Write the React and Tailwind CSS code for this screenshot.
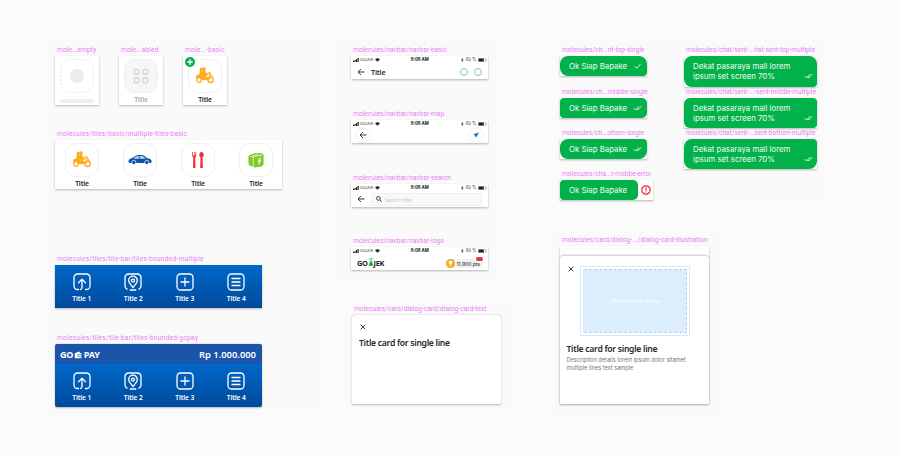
import React from "react";

const body = { fontFamily: 'Inter, "Liberation Sans", sans-serif' };

function Frame({ label, className, track = "tracking-[0.03px]", children }) {
  return (
    <div className={className}>
      <div className={`h-[11px] pl-[2px] text-[6.6px] leading-[11px] whitespace-nowrap text-[#e77df3] font-[Roboto,sans-serif] ${track}`}>{label}</div>
      {children}
    </div>
  );
}

const shadow = "shadow-[0_0.5px_2px_rgba(0,0,0,0.28)]";
const cardTitle = "text-[8.6px] leading-[12px] tracking-[-0.28px] font-semibold whitespace-nowrap text-[#25282c] font-['Noto_Sans',sans-serif]";

function Bike() {
  return (
    <svg viewBox="0 0 20 17" className="h-[17px] w-[20px]" fill="none" stroke="#fdaa1c">
      <circle cx="4" cy="13" r="2.3" strokeWidth="1.3" />
      <circle cx="15.600" cy="12.800" r="2.700" strokeWidth="1.400" />
      <path d="M5 1.200l1.500-.4.9 1 .9-1.400 1.900.3.300 1.800-.4 1.500.8 2.300 2 .5-.1 1.700-2.100.1.800 1.800 1.800-.4.500 1.700-1.300 1.300H7.200L6 11 1 10.400 1.400 8.500l2.800-.7L5 5z" fill="#fdaa1c" strokeWidth="0.3" />
      <path d="M12.600 6.200l2-.8 2.600 5M14 7.300l1 5.200" strokeWidth="1.200" />
      <path d="M7.300 3v1.600M7.300 8.300l1.700 1.600" stroke="#fff" strokeWidth=".5" />
    </svg>
  );
}

function Car() {
  return (
    <svg viewBox="0 0 24 12" className="h-[12px] w-[24px]">
      <path d="M1 5.500C3 4.400 5 3.800 7 2.200 9.500 .6 15 .8 17 2.300L19 4.200C21.500 4.600 23.600 5.200 23.600 7.200L23.200 9H1.200C.4 8 .4 6.500 1 5.500z" fill="#0b53a6" />
      <path d="M5.700 4.700C7 2.800 8.500 2.100 10.800 2.100v2.600zM11.700 2.100c2 0 3.300.4 4.700 1.200l1 1.400h-5.700z" fill="#c4d8ee" />
      <circle cx="5.800" cy="8.400" r="2.100" fill="#0b53a6" stroke="#fff" strokeWidth=".7" />
      <circle cx="18.800" cy="8.400" r="2.100" fill="#0b53a6" stroke="#fff" strokeWidth=".7" />
    </svg>
  );
}

function Cutlery() {
  return (
    <svg viewBox="0 0 14 18" className="h-[18px] w-[14px]">
      <path d="M1.200 1v3.800a2 2 0 0 0 1.100 1.600L2 17h2.500l-.3-10.600a2 2 0 0 0 1-1.600V1h-.8v3.500h-.8V1h-.7v3.500h-.9V1z" fill="#ee303b" />
      <path d="M10.500 1a2.200 2.900 0 0 1 1 5.500L11.900 17H9.200l.3-10.500A2.200 2.900 0 0 1 10.500 1z" fill="#ee303b" />
    </svg>
  );
}

function Bag() {
  return (
    <svg viewBox="0 0 18 18" className="h-[18px] w-[18px]">
      <path d="M1.500 5.500Q1.500 4.500 2.500 4L8.500 1.900 15 2.300l1.600 1.500V13.500L14.500 15.500 8 16.600 2.600 14.500 1.500 13z" fill="#80ca28" />
      <path d="M6.300 16V6.800Q6.300 5.800 7.300 5.600L15.500 3.900M6.300 6.300L3 5.200M5.200 5l6-1.800" fill="none" stroke="#fff" strokeWidth=".7" />
      <path d="M13.500 6.500l-2.500 3.800 1.400.1-.9 3.200 2.300-4-1.200-.2z" fill="#fff" stroke="#fff" strokeWidth=".5" />
    </svg>
  );
}

function Disabled() {
  return (
    <svg viewBox="0 0 16 16" className="h-[16px] w-[16px]" fill="none" stroke="#d2d2d4" strokeWidth="1.300">
      <rect x="1.200" y="1.400" width="4.800" height="4.800" rx="1.400" />
      <circle cx="12.500" cy="3.800" r="2.500" />
      <rect x="1.200" y="10" width="4.800" height="4.800" rx="1.400" />
      <rect x="10" y="10" width="4.800" height="4.800" rx="1.400" />
    </svg>
  );
}

function Tile({ icon, title = "Title", muted }) {
  return (
    <div className="flex h-[49px] w-[44px] flex-col items-center pt-[2.5px]">
      <div className={`flex h-[34px] w-[34px] items-center justify-center rounded-[11px] border border-[#f0f0f1] ${muted ? "bg-[#f6f6f6]" : "bg-white"}`}>{icon}</div>
      <div className={`mt-[2px] text-[6.800px] leading-[10px] tracking-[-0.15px] font-semibold font-['Noto_Sans',sans-serif] ${muted ? "text-[#aaabad]" : "text-[#25282c]"}`}>{title}</div>
    </div>
  );
}

const barShapes = [
  <g key="a"><path d="M5.500 16.500h-1A3.500 3.500 0 0 1 1 13V4.500A3.500 3.500 0 0 1 4.500 1h9A3.500 3.500 0 0 1 17 4.500V13a3.500 3.500 0 0 1-3.500 3.500h-1" /><path d="M7.500 16.500Q9 16 9 14V7M5.500 9.800L9 6.300l3.500 3.500" /></g>,
  <g key="b"><path d="M3 16.200A3.500 3.500 0 0 1 1 13V4.500A3.500 3.500 0 0 1 4.500 1h9A3.500 3.500 0 0 1 17 4.500V13a3.500 3.500 0 0 1-2 3.200M6.200 17h5.600" /><path d="M9 14.500C6.500 11.500 4.700 9.700 4.700 7.500a4.300 4.300 0 0 1 8.600 0c0 2.200-1.800 4-4.300 7z" /><circle cx="9" cy="7.600" r="1.500" /></g>,
  <g key="c"><rect x="1" y="1" width="16" height="16" rx="3.500" /><path d="M9 5v8M5 9h8" /></g>,
  <g key="d"><rect x="1" y="1" width="16" height="16" rx="3.500" /><path d="M5 5.500h8M5 9h8M5 12.500h8" /></g>,
];

function BlueTiles() {
  return (
    <div className="flex h-[43px] bg-gradient-to-b from-[#0068c9] to-[#004a9c] pl-[1px]">
      {barShapes.map((shape, i) => (
        <div key={i} className="flex w-[51.500px] flex-col items-center pt-[8px]">
          <svg viewBox="0 0 18 18" className="h-[18px] w-[18px]" fill="none" stroke="#fff" strokeWidth="1.300" strokeLinecap="round" strokeLinejoin="round">{shape}</svg>
          <div className="mt-[3px] text-[6.600px] leading-[10px] tracking-[-0.1px] font-semibold text-white font-['Noto_Sans',sans-serif]">Title {i + 1}</div>
        </div>
      ))}
    </div>
  );
}

function StatusBar() {
  return (
    <div className="flex h-[7px] items-center justify-between pr-[1.500px] pl-[2px] text-[4.300px] leading-[7px] text-[#333] font-[Inter,sans-serif]">
      <div className="flex w-[46px] items-center gap-[1px]">
        <svg viewBox="0 0 6 4" className="h-[4px] w-[6px]" fill="#222"><path d="M0 2.600h1.100V4H0zM1.500 2h1.100v2H1.500zM3 1.100h1.100V4H3zM4.500 0h1.200v4H4.500z" /></svg>
        <span className="text-[4px]">GOJEK</span>
        <svg viewBox="0 0 6 4" className="ml-[1px] h-[4px] w-[5px]" fill="#222"><path d="M0 1.200Q3-1.200 6 1.200L3 4z" /></svg>
      </div>
      <span className="font-bold text-[#222]">8:08 AM</span>
      <div className="flex w-[46px] items-center justify-end gap-[1px]">
        <svg viewBox="0 0 3 5" className="mr-[1px] h-[4px] w-[2.500px]" fill="none" stroke="#222" strokeWidth=".6"><path d="M.4 1.400l2.200 2.200L1.500 4.600V.4l1.100 1L.4 3.600" /></svg>
        <span>60 %</span>
        <svg viewBox="0 0 9 4" className="h-[4px] w-[9px]"><rect x=".25" y=".25" width="7.500" height="3.500" rx=".7" fill="none" stroke="#777" strokeWidth=".4" /><rect x=".5" y=".5" width="5.300" height="3" fill="#222" /><path d="M8.300 1.300v1.400" stroke="#777" strokeWidth=".5" /></svg>
      </div>
    </div>
  );
}

function Back() {
  return <svg viewBox="0 0 8 8" className="h-[8px] w-[8px] shrink-0" fill="none" stroke="#222" strokeWidth=".9"><path d="M7.500 4H1M4 1L1 4l3 3" /></svg>;
}

function Navbar({ label, className, children }) {
  return (
    <Frame label={label} className={className}>
      <div className={`h-[23px] w-[137px] bg-white ${shadow}`}>
        <StatusBar />
        <div className="flex h-[16px] items-center">{children}</div>
      </div>
    </Frame>
  );
}

function Close() {
  return <svg viewBox="0 0 6 6" className="h-[6px] w-[6px]" stroke="#25282c" strokeWidth=".9"><path d="M.7.7l4.600 4.600M5.300.7L.7 5.300" /></svg>;
}

function Ticks({ single }) {
  return (
    <svg viewBox="0 0 9 6" className="h-[6px] w-[9px] shrink-0" fill="none" stroke="#d6f7e0" strokeWidth="1">
      {single ? <path d="M1.800 3.200L3.800 5.200L7.500 1" /> : <path d="M.8 3.200L2.500 5L5.800 1.300M3.700 4L4.700 5L8.200 1.200" />}
    </svg>
  );
}

function Single({ label, track, className, shape, single, error }) {
  return (
    <Frame label={label} className={className} track={track}>
      <div className={`flex h-[20px] items-center bg-white ${shadow} ${error ? "w-[93px]" : "w-[87px]"}`}>
        <div className={`flex h-[20px] items-center bg-[#03b14b] pl-[9px] ${error ? "w-[78px]" : "w-[87px]"} ${shape}`}>
          <span className="w-[64px] text-[7.800px] leading-[10px] whitespace-nowrap text-[#eefdf2]">Ok Siap Bapake</span>
          {!error && <Ticks single={single} />}
        </div>
        {error && (
          <svg viewBox="0 0 10 10" className="ml-[3px] h-[10px] w-[10px]" fill="none" stroke="#e0262e" strokeWidth="1.200"><circle cx="5" cy="5" r="4.200" /><path d="M5 2.500v3.200M5 6.500v1.100" /></svg>
        )}
      </div>
    </Frame>
  );
}

function Multiple({ label, className, shape }) {
  return (
    <Frame label={label} className={className} track="tracking-[0px]">
      <div className={`w-[133px] bg-white ${shadow}`}>
        <div className={`flex items-start justify-between bg-[#03b14b] pt-[5px] pr-[4px] pl-[9px] ${shape}`}>
          <div className="text-[7.800px] leading-[10px] whitespace-nowrap text-[#eefdf2]">Dekat pasaraya mall lorem<br />ipsum set screen 70%</div>
          <div className="pt-[12px]"><Ticks /></div>
        </div>
      </div>
    </Frame>
  );
}

export default function App() {
  return (
    <div className="flex h-[455px] w-[900px] items-start overflow-hidden bg-[#fbfbfb]" style={body}>
      <section className="mt-[38px] ml-[48px] h-[377px] w-[272px] shrink-0 bg-[#fafafa] pt-[7px] pl-[7px]">
        <div className="flex gap-[20px]">
          <Frame label="mole...empty" className="w-[44px]" track="tracking-[0.1px]">
            <div className={`flex h-[49px] w-[44px] flex-col items-center bg-white pt-[2.500px] ${shadow}`}>
              <svg viewBox="0 0 34 34" className="h-[34px] w-[34px]">
                <rect x=".6" y=".6" width="32.800" height="32.800" rx="11" fill="none" stroke="#e4e4e7" strokeDasharray="2.200 1.800" />
                <circle cx="17" cy="17" r="7.200" fill="#ebebf1" />
              </svg>
              <div className="mt-[6px] h-[4px] w-[34px] rounded-full bg-[#eeeff2]" />
            </div>
          </Frame>
          <Frame label="mole...abled" className="w-[44px]" track="tracking-[0.12px]">
            <div className={`bg-white ${shadow}`}><Tile icon={<Disabled />} muted /></div>
          </Frame>
          <Frame label="mole...-basic" className="w-[44px]" track="tracking-[0.18px]">
            <div className={`relative bg-white ${shadow}`}>
              <Tile icon={<Bike />} />
              <svg viewBox="0 0 10 10" className="absolute top-[1px] left-[2px] h-[10px] w-[10px]"><circle cx="5" cy="5" r="5" fill="#03b14b" /><path d="M5 2.300v5.400M2.300 5h5.400" stroke="#fff" strokeWidth="1.300" /></svg>
            </div>
          </Frame>
        </div>
        <Frame label="molecules/tiles/basic/multiple-tiles-basic" className="mt-[24px] w-[227px]" track="tracking-[0.2px]">
          <div className={`flex h-[49px] gap-[14px] bg-white pl-[5px] ${shadow}`}>
            <Tile icon={<Bike />} /><Tile icon={<Car />} /><Tile icon={<Cutlery />} /><Tile icon={<Bag />} />
          </div>
        </Frame>
        <Frame label="molecules/tiles/tile-bar/tiles-bounded-multiple" className="mt-[65px] w-[207px]" track="tracking-[0.23px]">
          <div className={shadow}><BlueTiles /></div>
        </Frame>
        <Frame label="molecules/tiles/tile-bar/tiles-bounded-gopay" className="mt-[25px] w-[207px]" track="tracking-[0.25px]">
          <div className={`overflow-hidden rounded-[2px] ${shadow}`}>
            <div className="flex h-[20px] items-center justify-between bg-[#1a55ab] pt-[2px] pr-[6px] pl-[5px] font-bold text-white font-['Noto_Sans',sans-serif]">
              <div className="flex items-center gap-[1px] text-[9px] leading-[12px] tracking-[-0.2px]">
                <span>GO</span>
                <svg viewBox="0 0 9 8" className="mb-[1px] h-[8px] w-[8.500px]"><path d="M.8 2.200L5.500.4l1 1.500H8v5.600H.8z" fill="#fff" /><path d="M8.500 3.500H5.200a1.200 1.200 0 0 0 0 2.400h3.300" fill="none" stroke="#1a55ab" strokeWidth=".7" /></svg>
                <span>PAY</span>
              </div>
              <span className="text-[9.400px] leading-[12px] font-semibold">Rp 1.000.000</span>
            </div>
            <BlueTiles />
          </div>
        </Frame>
      </section>

      <div className="ml-[16px] w-[178px] shrink-0 pt-[38px]">
        <section className="h-[247px] w-[165px] bg-[#fafafa] pt-[7px] pl-[15px]">
          <Navbar label="molecules/navbar/navbar-basic">
            <div className="flex w-full items-center pt-[1px] pr-[6px] pl-[6px]">
              <Back />
              <span className="ml-[6px] flex-1 text-[7.200px] leading-[10px] tracking-[-0.15px] font-semibold text-[#25282c] font-['Noto_Sans',sans-serif]">Title</span>
              <div className="mr-[6.500px] h-[8px] w-[8px] rounded-full border border-[#7fcfa0]" />
              <div className="h-[8px] w-[8px] rounded-full border border-[#7fcfa0]" />
            </div>
          </Navbar>
          <Navbar label="molecules/navbar/navbar-map" className="mt-[30px]">
            <div className="flex w-full items-center justify-between px-[5px]">
              <div className="flex h-[14px] w-[14px] items-center justify-center rounded-full bg-white shadow-[0_0_2px_rgba(0,0,0,0.15)]"><Back /></div>
              <div className="flex h-[14px] w-[14px] items-center justify-center rounded-full bg-white shadow-[0_0_2px_rgba(0,0,0,0.15)]">
                <svg viewBox="0 0 6 6" className="h-[6px] w-[6px]" fill="#1265c0"><path d="M5.900.2L.2 2.700l2.100.9.700 2.300z" /></svg>
              </div>
            </div>
          </Navbar>
          <Navbar label="molecules/navbar/navbar-search" className="mt-[30px]">
            <div className="flex w-full items-center pr-[6px] pl-[6px]">
              <Back />
              <div className="ml-[6px] flex h-[13px] flex-1 items-center rounded-[3px] border border-[#f0f0f0] bg-[#f9f9f9] pl-[4px]">
                <svg viewBox="0 0 6 6" className="h-[6px] w-[6px]" fill="none" stroke="#333" strokeWidth=".9"><circle cx="2.400" cy="2.400" r="1.900" /><path d="M3.800 3.800l2 2" /></svg>
                <span className="ml-[2.500px] pt-[1px] text-[5.100px] leading-[8px] text-[#c8c9cc]">Search title</span>
              </div>
            </div>
          </Navbar>
          <Navbar label="molecules/navbar/navbar-logo" className="mt-[29px]">
            <div className="flex w-full items-center justify-between pt-[2px] pr-[5px] pl-[6px]">
              <div className="flex items-center text-[7.400px] leading-[10px] tracking-[-0.3px] font-bold text-[#222] font-['Noto_Sans',sans-serif]">
                GO
                <svg viewBox="0 0 7 10" className="mb-[3px] h-[10px] w-[6px]" fill="none" stroke="#03a84b"><path d="M3.500 3.300L1 9.200h5z" fill="#03a84b" strokeWidth=".6" /><path d="M.7 1.500Q3.500-.5 6.300 1.500M1.800 2.800Q3.500 1.600 5.200 2.800" strokeWidth=".6" /></svg>
                JEK
              </div>
              <div className="relative flex h-[9px] w-[37px] items-center rounded-[4px] bg-[#f1f1f2]">
                <svg viewBox="0 0 10 10" className="h-[9px] w-[9px] shrink-0"><circle cx="5" cy="5" r="5" fill="#fdaa1c" /><path d="M3.200 2.200h3.600v2.500L5.600 6v2H4.400V6L3.200 4.700z" fill="#fff" /></svg>
                <span className="ml-[1.500px] pt-[1px] text-[4.900px] leading-[8px] font-medium whitespace-nowrap text-[#333]">11.900 pts</span>
                <div className="absolute -top-[2px] right-0 h-[4px] w-[7px] rounded-full bg-[#ea303c]" />
              </div>
            </div>
          </Navbar>
        </section>
        <section className="mt-[12px] ml-[9px] h-[116px] w-[168px] bg-[#fafafa] pt-[7px] pl-[7px]">
          <Frame label="molecules/card/dialog-card/dialog-card-text" className="w-[149px]" track="tracking-[0.07px]">
            <div className={`h-[89px] rounded-t-[4px] bg-white px-[7px] pt-[9px] ${shadow}`}>
              <div className="pl-[1px]"><Close /></div>
              <div className={`mt-[7px] ${cardTitle}`}>Title card for single line</div>
            </div>
          </Frame>
        </section>
      </div>

      <div className="ml-[36px] w-[280px] shrink-0 pt-[38px]">
        <section className="ml-[5px] flex h-[166px] w-[270px] gap-[31px] bg-[#fafafa] pt-[7px] pl-[5px]">
          <div className="w-[93px]">
            <Single label="molecules/ch...nt-top-single" track="tracking-[0.03px]" shape="rounded-[8px] rounded-br-[4px]" single />
            <Single label="molecules/ch...middle-single" track="tracking-[0.05px]" className="mt-[11px]" shape="rounded-l-[4px] rounded-r-[5px]" />
            <Single label="molecules/ch...ottom-single" track="tracking-[0px]" className="mt-[10px]" shape="rounded-[8px] rounded-tr-[4px]" />
            <Single label="molecules/cha...t-middle-error" track="tracking-[0.03px]" className="mt-[10px]" shape="rounded-l-[4px] rounded-r-[5px]" error />
          </div>
          <div className="w-[133px]">
            <Multiple label="molecules/chat/sent-...hat-sent-top-multiple" shape="h-[31px] rounded-[8px] rounded-br-[4px]" />
            <Multiple label="molecules/chat/sent-...-sent-middle-multiple" shape="h-[30px] rounded-l-[6px] rounded-r-[4px]" />
            <Multiple label="molecules/chat/sent-...sent-bottom-multiple" shape="h-[30px] rounded-[8px] rounded-tr-[4px]" />
          </div>
        </section>
        <section className="mt-[26px] h-[189px] w-[173px] bg-[#fafafa] pt-[5px] pl-[10px]">
          <Frame label="molecules/card/dialog-.../dialog-card-illustration" className="w-[149px]" track="tracking-[0.08px]">
            <div className={`h-[158px] bg-[#fdfdfd] pt-[10px] ${shadow}`}>
              <div className="h-[148px] rounded-t-[4px] bg-white pt-[10px] shadow-[0_-0.500px_2px_rgba(0,0,0,0.22)]">
                <div className="flex">
                  <div className="w-[20px] pl-[8px]"><Close /></div>
                  <div className="h-[70px] w-[110px] border border-[#d7eafd] p-[2px]">
                    <div className="relative flex h-full items-center justify-center bg-[#dcedfe] text-[5.900px] font-bold text-[#f4faff] font-['Noto_Sans',sans-serif]">
                      Illustration Area
                      <svg viewBox="0 0 104 64" className="absolute top-0 left-0 h-[64px] w-[104px]" fill="none" stroke="#86add8" strokeDasharray="1 4"><path d="M2 .5H103.500V63.500H2" /></svg>
                    </div>
                  </div>
                </div>
                <div className={`mt-[7px] pl-[6.500px] ${cardTitle}`}>Title card for single line</div>
                <div className="pt-[1px] pl-[6.500px] text-[5.600px] leading-[8px] whitespace-nowrap text-[#74777c]">Description details lorem ipsum dolor sitamet<br />multiple lines text sample</div>
              </div>
            </div>
          </Frame>
        </section>
      </div>
    </div>
  );
}
